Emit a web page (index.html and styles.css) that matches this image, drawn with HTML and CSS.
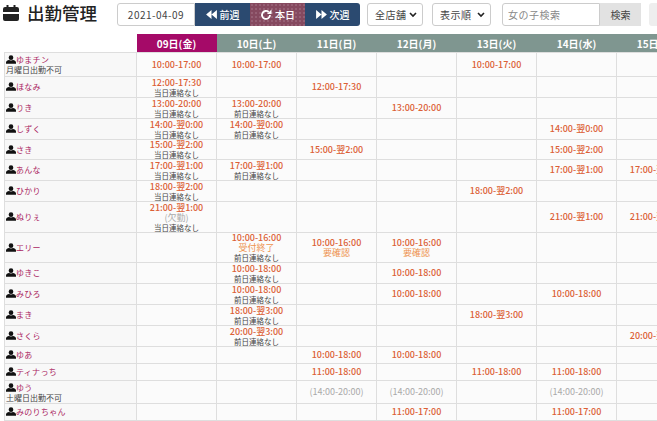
FILE: index.html
```html
<!DOCTYPE html>
<html lang="ja">
<head>
  <meta charset="UTF-8" />
  <title>出勤管理</title>
  <link rel="stylesheet" href="styles.css">
</head>
<body>
<svg class="defs" width="0" height="0">
  <symbol id="user" viewBox="0 0 12 10"><circle cx="6" cy="2.8" r="2.8"/><path d="M0 10V8.6C0 6.8 2 5.8 3.6 5.6 4.4 6.2 7.6 6.2 8.4 5.6 10 5.8 12 6.8 12 8.6V10Z"/></symbol>
  <symbol id="back" viewBox="0 0 12 10"><path d="M6 0V10L0 5ZM12 0V10L6 5Z"/></symbol>
  <symbol id="next" viewBox="0 0 12 10"><path d="M0 0V10L6 5ZM6 0V10L12 5Z"/></symbol>
</svg>
<header class="topbar">
  <h1 class="title">
    <svg class="title-icon" viewBox="0 0 16 16"><path d="M3.5 0h2v2.5h-2zM10.5 0h2v2.5h-2z"/><path d="M2 2h12a2 2 0 0 1 2 2v3H0V4a2 2 0 0 1 2-2zM0 9h16v5a2 2 0 0 1-2 2H2a2 2 0 0 1-2-2z"/></svg>
    <span>出勤管理</span>
  </h1>
  <input class="date-input" type="text" value="2021-04-09">
  <div class="week-buttons">
    <button class="week-btn first"><svg class="btn-icon"><use href="#back"/></svg>前週</button>
    <button class="week-btn today"><svg class="btn-icon redo" viewBox="0 0 12 12"><path d="M10 6a4 4 0 1 1-1.3-3" fill="none" stroke="#fff" stroke-width="1.8"/><path d="M11.5 .5V5H7Z" fill="#fff"/></svg>本日</button>
    <button class="week-btn"><svg class="btn-icon"><use href="#next"/></svg>次週</button>
  </div>
  <select class="filter shop"><option>全店舗</option></select>
  <select class="filter order"><option>表示順</option></select>
  <div class="search">
    <input class="search-input" type="text" placeholder="女の子検索">
    <button class="search-btn">検索</button>
  </div>
  <button class="extra-btn"></button>
</header>
<table class="shift">
  <colgroup>
    <col class="col-name"><col class="col-day"><col class="col-day"><col class="col-day"><col class="col-day"><col class="col-day"><col class="col-day"><col class="col-day">
  </colgroup>
  <thead>
    <tr>
      <th class="blank"></th>
      <th class="now">09日(金)</th><th>10日(土)</th><th>11日(日)</th><th>12日(月)</th><th>13日(火)</th><th>14日(水)</th><th>15日(木)</th>
    </tr>
  </thead>
  <tbody>
    <tr class="h24">
      <td class="name"><svg class="user"><use href="#user"/></svg><span>ゆまチン</span><div class="note">月曜日出勤不可</div></td>
      <td><b>10:00-17:00</b></td><td><b>10:00-17:00</b></td><td></td><td></td><td><b>10:00-17:00</b></td><td></td><td></td>
    </tr>
    <tr class="h21">
      <td class="name"><svg class="user"><use href="#user"/></svg><span>ほなみ</span></td>
      <td><b>12:00-17:30</b><i>当日連絡なし</i></td><td></td><td><b>12:00-17:30</b></td><td></td><td></td><td></td><td></td>
    </tr>
    <tr class="h21">
      <td class="name"><svg class="user"><use href="#user"/></svg><span>りき</span></td>
      <td><b>13:00-20:00</b><i>当日連絡なし</i></td><td><b>13:00-20:00</b><i>前日連絡なし</i></td><td></td><td><b>13:00-20:00</b></td><td></td><td></td><td></td>
    </tr>
    <tr class="h21">
      <td class="name"><svg class="user"><use href="#user"/></svg><span>しずく</span></td>
      <td><b>14:00-翌0:00</b><i>当日連絡なし</i></td><td><b>14:00-翌0:00</b><i>前日連絡なし</i></td><td></td><td></td><td></td><td><b>14:00-翌0:00</b></td><td></td>
    </tr>
    <tr class="h20">
      <td class="name"><svg class="user"><use href="#user"/></svg><span>さき</span></td>
      <td><b>15:00-翌2:00</b><i>当日連絡なし</i></td><td></td><td><b>15:00-翌2:00</b></td><td></td><td></td><td><b>15:00-翌2:00</b></td><td></td>
    </tr>
    <tr class="h21">
      <td class="name"><svg class="user"><use href="#user"/></svg><span>あんな</span></td>
      <td><b>17:00-翌1:00</b><i>当日連絡なし</i></td><td><b>17:00-翌1:00</b><i>前日連絡なし</i></td><td></td><td></td><td></td><td><b>17:00-翌1:00</b></td><td><b>17:00-翌1:00</b></td>
    </tr>
    <tr class="h21">
      <td class="name"><svg class="user"><use href="#user"/></svg><span>ひかり</span></td>
      <td><b>18:00-翌2:00</b><i>当日連絡なし</i></td><td></td><td></td><td></td><td><b>18:00-翌2:00</b></td><td></td><td></td>
    </tr>
    <tr class="h31">
      <td class="name"><svg class="user"><use href="#user"/></svg><span>ぬりぇ</span></td>
      <td><b>21:00-翌1:00</b><em>(欠勤)</em><i>当日連絡なし</i></td><td></td><td></td><td></td><td></td><td><b>21:00-翌1:00</b></td><td><b>21:00-翌1:00</b></td>
    </tr>
    <tr class="h30">
      <td class="name"><svg class="user"><use href="#user"/></svg><span>エリー</span></td>
      <td></td><td><b>10:00-16:00</b><u>受付終了</u><i>前日連絡なし</i></td><td><b>10:00-16:00</b><u>要確認</u></td><td><b>10:00-16:00</b><u>要確認</u></td><td></td><td></td><td></td>
    </tr>
    <tr class="h21">
      <td class="name"><svg class="user"><use href="#user"/></svg><span>ゆきこ</span></td>
      <td></td><td><b>10:00-18:00</b><i>前日連絡なし</i></td><td></td><td><b>10:00-18:00</b></td><td></td><td></td><td></td>
    </tr>
    <tr class="h21">
      <td class="name"><svg class="user"><use href="#user"/></svg><span>みひろ</span></td>
      <td></td><td><b>10:00-18:00</b><i>前日連絡なし</i></td><td></td><td><b>10:00-18:00</b></td><td></td><td><b>10:00-18:00</b></td><td></td>
    </tr>
    <tr class="h21">
      <td class="name"><svg class="user"><use href="#user"/></svg><span>まき</span></td>
      <td></td><td><b>18:00-翌3:00</b><i>前日連絡なし</i></td><td></td><td></td><td><b>18:00-翌3:00</b></td><td></td><td></td>
    </tr>
    <tr class="h21">
      <td class="name"><svg class="user"><use href="#user"/></svg><span>さくら</span></td>
      <td></td><td><b>20:00-翌3:00</b><i>前日連絡なし</i></td><td></td><td></td><td></td><td></td><td><b>20:00-翌3:00</b></td>
    </tr>
    <tr class="h17">
      <td class="name"><svg class="user"><use href="#user"/></svg><span>ゆあ</span></td>
      <td></td><td></td><td><b>10:00-18:00</b></td><td><b>10:00-18:00</b></td><td></td><td></td><td></td>
    </tr>
    <tr class="h17">
      <td class="name"><svg class="user"><use href="#user"/></svg><span>ティナっち</span></td>
      <td></td><td></td><td><b>11:00-18:00</b></td><td></td><td><b>11:00-18:00</b></td><td><b>11:00-18:00</b></td><td></td>
    </tr>
    <tr class="h23">
      <td class="name"><svg class="user"><use href="#user"/></svg><span>ゆう</span><div class="note">土曜日出勤不可</div></td>
      <td></td><td></td><td><em>(14:00-20:00)</em></td><td><em>(14:00-20:00)</em></td><td></td><td><em>(14:00-20:00)</em></td><td></td>
    </tr>
    <tr class="h17">
      <td class="name"><svg class="user"><use href="#user"/></svg><span>みのりちゃん</span></td>
      <td></td><td></td><td></td><td><b>11:00-17:00</b></td><td></td><td><b>11:00-17:00</b></td><td></td>
    </tr>
  </tbody>
</table>
</body>
</html>
```

FILE: styles.css
```css
html, body {
  margin: 0;
  padding: 0;
  height: 421px;
  overflow: hidden;
  background-color: #fff;
  color: #333;
  font-family: "Noto Sans CJK JP", "Noto Sans", sans-serif;
}
.defs {
  position: absolute;
}
.topbar {
  display: flex;
  align-items: flex-start;
  height: 34px;
  padding: 3px 0 0 3px;
  box-sizing: border-box;
  width: 700px;
}
.title {
  display: flex;
  align-items: center;
  gap: 8px;
  width: 114px;
  height: 18px;
  margin: 0;
  font-size: 17.5px;
  font-weight: 500;
  color: #222;
  white-space: nowrap;
}
.title-icon {
  width: 16px;
  height: 16px;
  margin-top: 2px;
  flex: none;
  fill: #222;
}
.date-input {
  width: 78px;
  height: 23px;
  box-sizing: border-box;
  border: 1px solid #ccc;
  border-radius: 3px 0 0 3px;
  font: 10px "Noto Sans CJK JP", sans-serif;
  letter-spacing: .5px;
  color: #444;
  text-align: center;
  padding: 0;
}
.week-buttons {
  display: flex;
  margin-right: 7px;
}
.week-btn {
  display: flex;
  align-items: center;
  justify-content: center;
  gap: 3px;
  width: 55px;
  height: 23px;
  border: none;
  padding: 0;
  background-color: #2b4a70;
  color: #fff;
  font: 500 10px "Noto Sans CJK JP", sans-serif;
}
.week-btn:last-child {
  border-radius: 0 3px 3px 0;
}
.today {
  background-color: #85495f;
  background-image: radial-gradient(#a8798c 0.6px, transparent 0.8px);
  background-size: 4px 4px;
}
.btn-icon {
  width: 11px;
  height: 9px;
  fill: #fff;
}
.redo {
  width: 12px;
  height: 12px;
}
.filter {
  appearance: none;
  height: 23px;
  border: 1px solid #ccc;
  border-radius: 3px;
  background: #fff url("data:image/svg+xml,%3Csvg xmlns='http://www.w3.org/2000/svg' viewBox='0 0 8 6'%3E%3Cpath d='M1 1l3 3 3-3' fill='none' stroke='%23222' stroke-width='1.6'/%3E%3C/svg%3E") no-repeat right 5px center / 8px 6px;
  font: 10px "Noto Sans CJK JP", sans-serif;
  letter-spacing: .5px;
  color: #444;
  padding: 0 0 0 7px;
  box-sizing: border-box;
}
.shop {
  width: 56px;
  margin-right: 9px;
}
.order {
  width: 59px;
  margin-right: 11px;
}
.search {
  display: flex;
  margin-right: 8px;
}
.search-input {
  width: 98px;
  height: 23px;
  box-sizing: border-box;
  border: 1px solid #ccc;
  border-radius: 3px 0 0 3px;
  padding: 0 5px;
  font: 10px "Noto Sans CJK JP", sans-serif;
  letter-spacing: .5px;
}
.search-input::placeholder {
  color: #888;
}
.search-btn {
  width: 41px;
  height: 23px;
  border: none;
  padding: 0;
  background-color: #e2e2e2;
  color: #444;
  font: 10px "Noto Sans CJK JP", sans-serif;
}
.extra-btn {
  width: 40px;
  height: 23px;
  border: none;
  border-radius: 3px;
  background-color: #eee;
}
.shift {
  table-layout: fixed;
  border-collapse: collapse;
  width: 692px;
  margin-left: 4px;
}
.col-name {
  width: 132px;
}
.col-day {
  width: 80px;
}
.shift th {
  height: 18px;
  padding: 0;
  background-color: #7f9690;
  color: #fff;
  font-size: 10px;
  font-weight: 700;
}
.shift th.now {
  background-color: #a50a68;
}
.shift th.blank {
  background-color: transparent;
}
.shift td {
  padding: 0;
  border: 1px solid #dedede;
  background-color: #fbfbfb;
  text-align: center;
  vertical-align: middle;
  overflow: hidden;
  font-size: 8px;
  line-height: 10px;
}
.shift td.name {
  background-color: #f8f8f8;
  text-align: left;
  padding-left: 1px;
}
.h24 { height: 24px; }
.h23 { height: 23px; }
.h21 { height: 21px; }
.h20 { height: 20px; }
.h31 { height: 31px; }
.h30 { height: 30px; }
.h17 { height: 17px; }
.user {
  width: 10px;
  height: 9px;
  fill: #111;
  vertical-align: -1px;
}
.name span {
  font-size: 8px;
  letter-spacing: .3px;
  color: #ab1f62;
}
.note {
  font-size: 8px;
  line-height: 9px;
  color: #444;
}
.shift b, .shift i, .shift em, .shift u {
  display: block;
  font-style: normal;
  text-decoration: none;
}
.shift b {
  font-size: 9px;
  line-height: 10px;
  font-weight: 500;
  color: #dc5f36;
}
.shift i {
  font-size: 7.5px;
  line-height: 9px;
  color: #444;
}
.shift em {
  font-size: 9px;
  line-height: 10px;
  color: #aaa;
}
.shift u {
  font-size: 9px;
  line-height: 10px;
  color: #ee9350;
}
```
